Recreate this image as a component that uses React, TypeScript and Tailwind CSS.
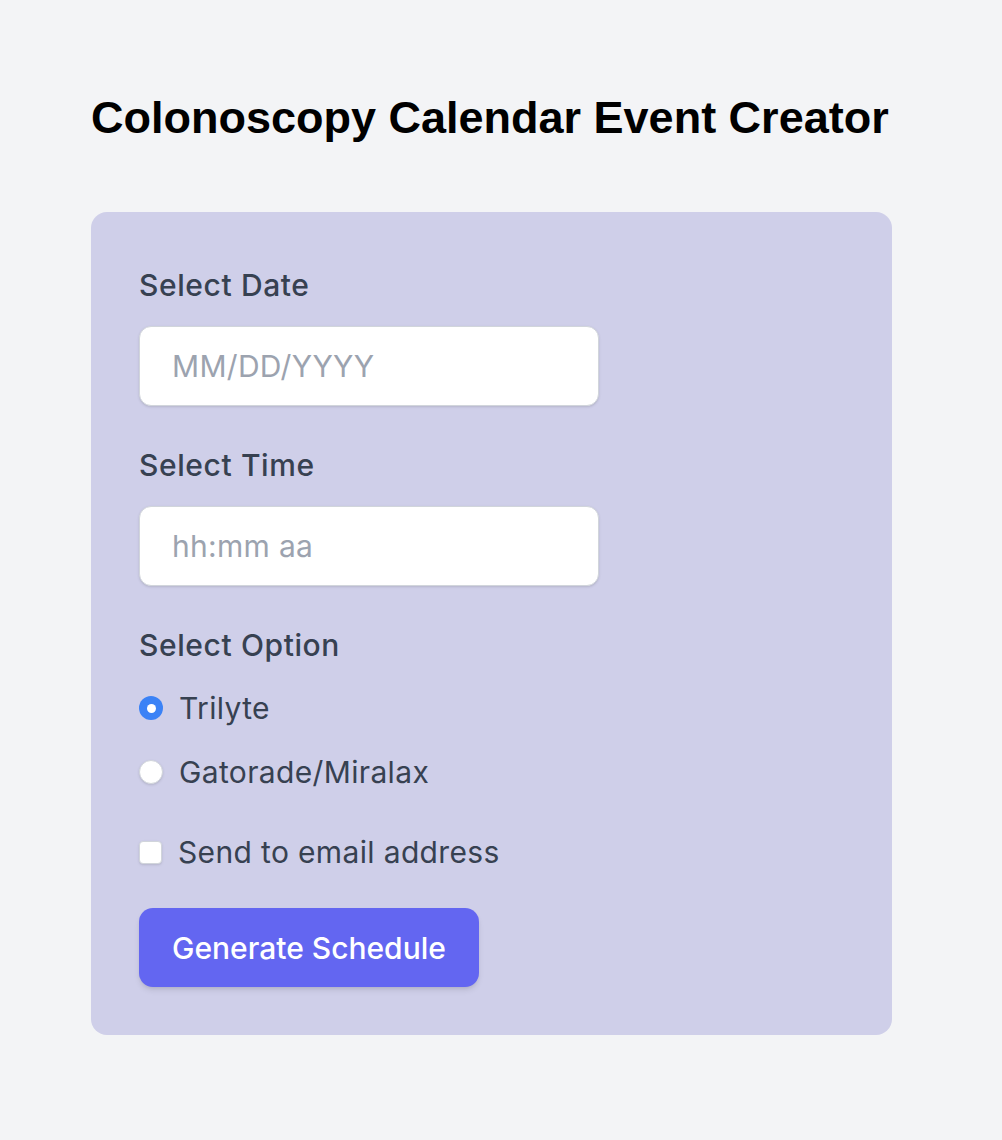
import React, { useState } from 'react'

export default function App() {
  const [option, setOption] = useState('trilyte')
  const [sendEmail, setSendEmail] = useState(false)

  return (
    <div className="min-h-[1140px] w-full bg-[#f3f4f6] pl-[91px] pt-[94px]">
      <h1 className="font-['Liberation_Sans',Arial,sans-serif] text-[45px] leading-[48px] font-bold text-black">
        Colonoscopy Calendar Event Creator
      </h1>

      {/* Form card */}
      <div className="mt-[70px] w-[801px] rounded-[16px] bg-[#cfcfe9] px-[48px] pt-[53px] pb-[48px] font-['Inter',sans-serif]">
        <label className="block text-[30px] leading-[40px] font-medium tracking-[0.6px] text-[#374151]">
          Select Date
        </label>
        <input
          type="text"
          placeholder="MM/DD/YYYY"
          className="mt-[21px] block h-[80px] w-[460px] rounded-[12px] border border-[#d1d5db] bg-white px-[32px] text-[30px] tracking-[0.3px] text-[#374151] shadow-sm outline-none placeholder:text-[#9ca3af]"
        />

        <label className="mt-[39px] block text-[30px] leading-[40px] font-medium tracking-[0.6px] text-[#374151]">
          Select Time
        </label>
        <input
          type="text"
          placeholder="hh:mm aa"
          className="mt-[21px] block h-[80px] w-[460px] rounded-[12px] border border-[#d1d5db] bg-white px-[32px] text-[30px] tracking-[0.3px] text-[#374151] shadow-sm outline-none placeholder:text-[#9ca3af]"
        />

        <div className="mt-[39px] text-[30px] leading-[40px] font-medium tracking-[0.6px] text-[#374151]">
          Select Option
        </div>

        <div className="mt-[19px] flex flex-col gap-[16px]">
          <button
            type="button"
            onClick={() => setOption('trilyte')}
            className="flex h-[48px] items-center gap-[16px] text-left"
          >
            <span
              className={
                option === 'trilyte'
                  ? 'flex h-[24px] w-[24px] items-center justify-center rounded-full bg-[#3b82f6]'
                  : 'flex h-[24px] w-[24px] items-center justify-center rounded-full border border-[#d1d5db] bg-white shadow-sm'
              }
            >
              {option === 'trilyte' && <span className="h-[9px] w-[9px] rounded-full bg-white" />}
            </span>
            <span className="text-[30px] leading-[48px] tracking-[0.35px] text-[#374151]">Trilyte</span>
          </button>
          <button
            type="button"
            onClick={() => setOption('gatorade')}
            className="flex h-[48px] items-center gap-[16px] text-left"
          >
            <span
              className={
                option === 'gatorade'
                  ? 'flex h-[24px] w-[24px] items-center justify-center rounded-full bg-[#3b82f6]'
                  : 'flex h-[24px] w-[24px] items-center justify-center rounded-full border border-[#d1d5db] bg-white shadow-sm'
              }
            >
              {option === 'gatorade' && <span className="h-[9px] w-[9px] rounded-full bg-white" />}
            </span>
            <span className="text-[30px] leading-[48px] tracking-[0.35px] text-[#374151]">Gatorade/Miralax</span>
          </button>
        </div>

        <button
          type="button"
          onClick={() => setSendEmail(!sendEmail)}
          className="mt-[32px] flex h-[48px] items-center gap-[16px] text-left"
        >
          <span
            className={
              sendEmail
                ? 'h-[23px] w-[23px] rounded-[4px] bg-[#3b82f6]'
                : 'h-[23px] w-[23px] rounded-[4px] border border-[#d1d5db] bg-white shadow-sm'
            }
          />
          <span className="text-[30px] leading-[48px] tracking-[0.35px] text-[#374151]">Send to email address</span>
        </button>

        <button
          type="button"
          className="mt-[32px] h-[79px] rounded-[14px] bg-[#6366f1] px-[33px] text-[30px] leading-[48px] font-medium text-white shadow-md"
        >
          Generate Schedule
        </button>
      </div>
    </div>
  )
}
